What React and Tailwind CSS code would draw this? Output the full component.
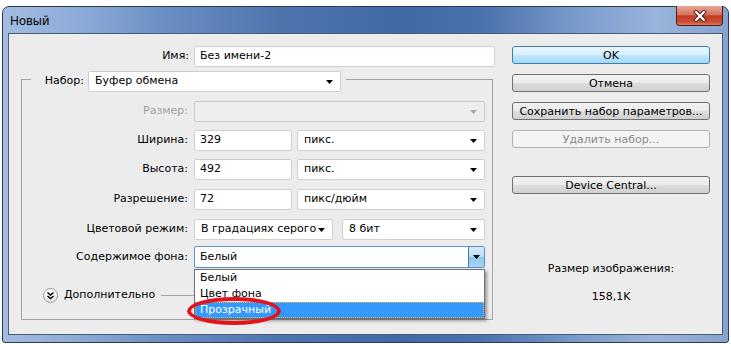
import React from "react";

const font = { fontFamily: '"DejaVu Sans", Verdana, sans-serif' };

const Arrow = ({ color = "#000" }) => (
  <svg width="7" height="4" viewBox="0 0 7 4" className="shrink-0">
    <path d="M0 0H7L3.5 4Z" fill={color} />
  </svg>
);

const Input = ({ value, w }) => (
  <div className={`${w} h-[21px] bg-white border border-[#cfcfcf] rounded-[2px] flex items-center pl-[5px] text-black`}>
    {value}
  </div>
);

const Select = ({ value, w, disabled }) => (
  <div
    className={`${w} h-[21px] border rounded-[2px] flex items-center pl-[6px] pr-[7px] ${
      disabled ? "bg-[#eeeeee] border-[#c9c9c9]" : "bg-white border-[#cfcfcf]"
    }`}
  >
    <span className="flex-1 whitespace-nowrap overflow-hidden">{value}</span>
    <Arrow color={disabled ? "#a8a8a8" : "#000"} />
  </div>
);

const Row = ({ label, children, className = "", disabled }) => (
  <div className={`flex items-center ${className}`}>
    <div className={`w-[167px] text-right pr-[1px] ${disabled ? "text-[#a0a0a0]" : "text-black"}`}>{label}</div>
    <div className="ml-[5px] flex">{children}</div>
  </div>
);

const Button = ({ children, primary, disabled, className = "" }) => {
  let cls =
    "border-[#707070] bg-[linear-gradient(180deg,#f2f2f2_0%,#ebebeb_48%,#dddddd_52%,#cfcfcf_100%)] text-black";
  if (primary)
    cls =
      "border-[#3c7fb1] bg-[linear-gradient(180deg,#eaf6fd_0%,#d9f0fc_48%,#bee6fd_52%,#a7d9f5_100%)] text-black";
  if (disabled) cls = "border-[#adb2b5] bg-[#f4f4f4] text-[#8a8a8a]";
  return (
    <div
      className={`h-[18px] w-[198px] border rounded-[3px] flex items-center justify-center leading-none ${cls} ${className}`}
    >
      {children}
    </div>
  );
};

export default function App() {
  return (
    <div className="w-[731px] h-[344px] bg-white overflow-hidden text-[11px]" style={font}>
      {/* window frame */}
      <div className="ml-[2px] mt-[6px] w-[727px] h-[337px] rounded-t-[7px] rounded-b-[3px] border border-[#2c3b53] flex flex-col px-[5px] pb-[7px] bg-[linear-gradient(90deg,#a3bce0_0%,#8eacd8_10%,#6b8fc4_22%,#4e75ae_38%,#4169a6_55%,#4a72ac_66%,#7c9dcd_80%,#9ab3da_90%,#86a3d0_100%)]">
        {/* title bar */}
        <div className="h-[26px] flex justify-between">
          <div className="pl-[2px] pt-[5px] text-[12px] text-black" style={{ fontFamily: '"Noto Sans", sans-serif' }}>
            Новый
          </div>
          <div className="-mt-[1px] w-[47px] h-[20px] rounded-b-[4px] border border-t-0 border-[#4a2119] flex items-center justify-center bg-[linear-gradient(180deg,#e8a796_0%,#d7735d_45%,#c23b23_52%,#cf4f37_85%,#e07b5f_100%)]">
            <svg width="14" height="12" viewBox="0 0 14 12">
              <path d="M3 2L11 10M11 2L3 10" stroke="#3a1a14" strokeWidth="4" strokeLinecap="square" />
              <path d="M3 2L11 10M11 2L3 10" stroke="#ffffff" strokeWidth="2.2" strokeLinecap="square" />
            </svg>
          </div>
        </div>

        {/* client area */}
        <div className="flex-1 border border-[#4b5b77] bg-[#ececec] flex">
          {/* left column */}
          <div className="w-[486px] shrink-0 flex flex-col pt-[12px]">
            <div className="flex items-center">
              <div className="w-[180px] text-right text-black">Имя:</div>
              <div className="ml-[5px]">
                <Input value="Без имени-2" w="w-[301px]" />
              </div>
            </div>

            <fieldset className="ml-[12px] w-[472px] border border-[#a3a3a3] pb-[16px]">
              <legend className="ml-[9px] pt-[4px] pr-[5px] pl-[10px] flex items-center">
                <span className="w-[43px] text-right text-black">Набор:</span>
                <div className="ml-[4px]">
                  <Select value="Буфер обмена" w="w-[253px]" />
                </div>
              </legend>

              <Row label="Размер:" disabled className="mt-[9px]">
                <Select value="" w="w-[291px]" disabled />
              </Row>
              <Row label="Ширина:" className="mt-[8px]">
                <Input value="329" w="w-[98px]" />
                <div className="ml-[5px]">
                  <Select value="пикс." w="w-[188px]" />
                </div>
              </Row>
              <Row label="Высота:" className="mt-[8px]">
                <Input value="492" w="w-[98px]" />
                <div className="ml-[5px]">
                  <Select value="пикс." w="w-[188px]" />
                </div>
              </Row>
              <Row label="Разрешение:" className="mt-[9px]">
                <Input value="72" w="w-[98px]" />
                <div className="ml-[5px]">
                  <Select value="пикс/дюйм" w="w-[188px]" />
                </div>
              </Row>
              <Row label="Цветовой режим:" className="mt-[9px]">
                <Select value="В градациях серого" w="w-[139px]" />
                <div className="ml-[9px]">
                  <Select value="8 бит" w="w-[143px]" />
                </div>
              </Row>
              <Row label="Содержимое фона:" className="mt-[6px]">
                <div className="relative">
                  <div className="w-[291px] h-[22px] bg-white border border-[#5b8fc9] rounded-[2px] flex items-center pl-[5px]">
                    <span className="flex-1">Белый</span>
                    <div className="w-[16px] h-[20px] border-l border-[#3c7fb1] flex items-center justify-center bg-[linear-gradient(180deg,#d6ecfb_0%,#b6dcf6_48%,#8fc6ee_52%,#a9d4f3_100%)]">
                      <Arrow />
                    </div>
                  </div>

                  {/* open list */}
                  <div className="absolute left-0 top-[23px] w-[291px] z-10 bg-white border border-[#6f6f6f] shadow-[2px_2px_3px_rgba(0,0,0,0.35)] flex flex-col">
                    <div className="h-[16px] flex items-center pl-[5px] text-black">Белый</div>
                    <div className="h-[16px] flex items-center pl-[5px] text-black">Цвет фона</div>
                    <div className="h-[16px] flex items-center pl-[4px] bg-[#3399ff] text-white border border-dotted border-[#f0b050]">
                      Прозрачный
                    </div>
                  </div>
                  {/* red marker ellipse */}
                  <div className="absolute -left-[7px] top-[51px] w-[94px] h-[28px] z-20 rounded-[50%] border-[4px] border-[#e3121c]" />
                </div>
              </Row>

              <div className="mt-[19px] h-[16px] flex items-center pl-[21px]">
                <div className="w-[15px] h-[15px] rounded-full border border-[#9a9a9a] bg-[linear-gradient(180deg,#ffffff_0%,#e4e4e4_100%)] flex items-center justify-center">
                  <svg width="9" height="9" viewBox="0 0 9 9">
                    <path d="M1.5 1.5L4.5 4L7.5 1.5M1.5 5L4.5 7.5L7.5 5" stroke="#000" strokeWidth="1.4" fill="none" />
                  </svg>
                </div>
                <span className="ml-[6px] text-black">Дополнительно</span>
                <div className="ml-[6px] flex-1 mr-[7px] h-px bg-[#a3a3a3]" />
              </div>
            </fieldset>
          </div>

          {/* right column */}
          <div className="ml-[17px] w-[198px] flex flex-col pt-[12px]">
            <Button primary>OK</Button>
            <Button className="mt-[10px]">Отмена</Button>
            <Button className="mt-[10px]">Сохранить набор параметров...</Button>
            <Button disabled className="mt-[10px]">Удалить набор...</Button>
            <Button className="mt-[28px]">Device Central...</Button>

            <div className="mt-[67px] text-center text-black">Размер изображения:</div>
            <div className="mt-[11px] text-center text-black">158,1K</div>
          </div>
        </div>
      </div>
    </div>
  );
}
